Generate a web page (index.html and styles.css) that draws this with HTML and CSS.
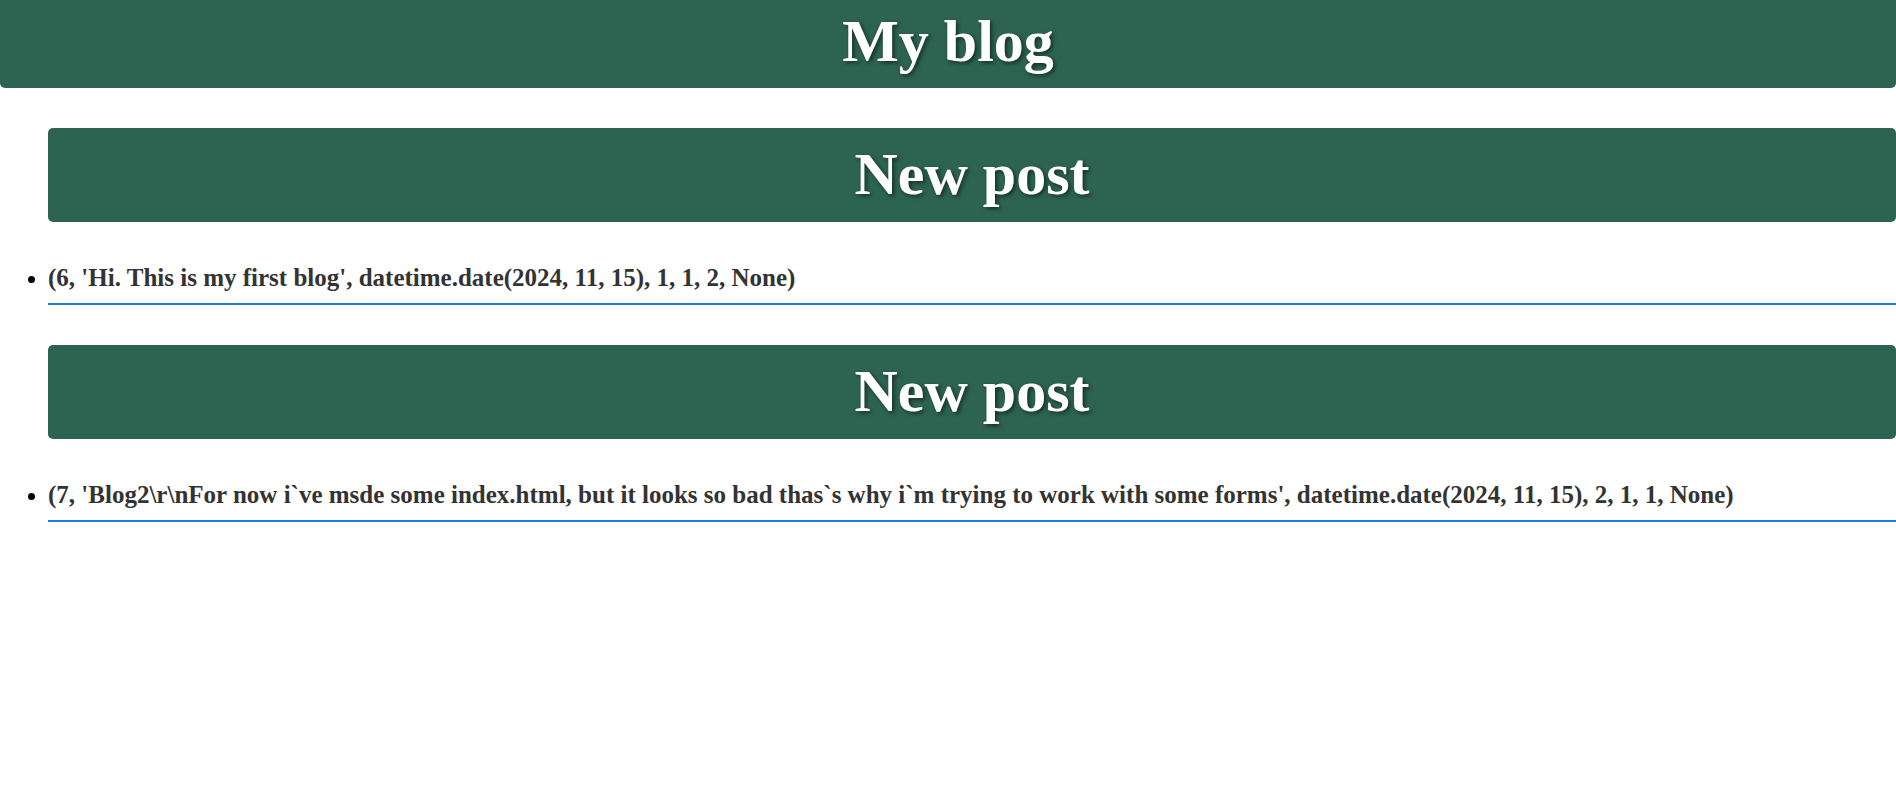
FILE: index.html
```html
<!DOCTYPE html>
<html lang="en">
<head>
<meta charset="utf-8">
<title>My blog</title>
<link rel="stylesheet" href="styles.css">
</head>
<body>
<header class="site-header">
  <h1 class="site-title">My blog</h1>
</header>
<main class="posts">
  <section class="post">
    <h2 class="post-title">New post</h2>
    <ul class="post-list">
      <li class="post-text">(6, 'Hi. This is my first blog', datetime.date(2024, 11, 15), 1, 1, 2, None)</li>
    </ul>
  </section>
  <section class="post">
    <h2 class="post-title">New post</h2>
    <ul class="post-list">
      <li class="post-text">(7, 'Blog2\r\nFor now i`ve msde some index.html, but it looks so bad thas`s why i`m trying to work with some forms', datetime.date(2024, 11, 15), 2, 1, 1, None)</li>
    </ul>
  </section>
</main>
</body>
</html>
```

FILE: styles.css
```css
html, body {
  margin: 0;
  padding: 0;
  background: #ffffff;
}

body {
  font-family: "Liberation Serif", "Times New Roman", serif;
  color: #333333;
}

.site-header {
  background: #2d6451;
  border-radius: 0 0 5px 5px;
  padding: 7px 0 12px;
}

.site-title,
.post-title {
  margin: 0;
  font-size: 60px;
  line-height: 69px;
  font-weight: bold;
  color: #ffffff;
  text-align: center;
  text-shadow: 2px 2px 4px rgba(0, 0, 0, 0.55);
}

.posts {
  padding-top: 40px;
}

.post {
  margin-left: 48px;
  margin-bottom: 40px;
}

.post-title {
  background: #2d6451;
  border-radius: 5px;
  padding: 12px 0 13px;
}

.post-list {
  margin: 0;
  padding: 0;
  list-style: disc outside;
}

.post-text {
  margin-top: 41px;
  padding-bottom: 11px;
  border-bottom: 2px solid #1f78f0;
  font-size: 25px;
  line-height: 29px;
  font-weight: bold;
  color: #333333;
}

.post-text::marker {
  color: #000000;
  font-size: 22px;
}
```
